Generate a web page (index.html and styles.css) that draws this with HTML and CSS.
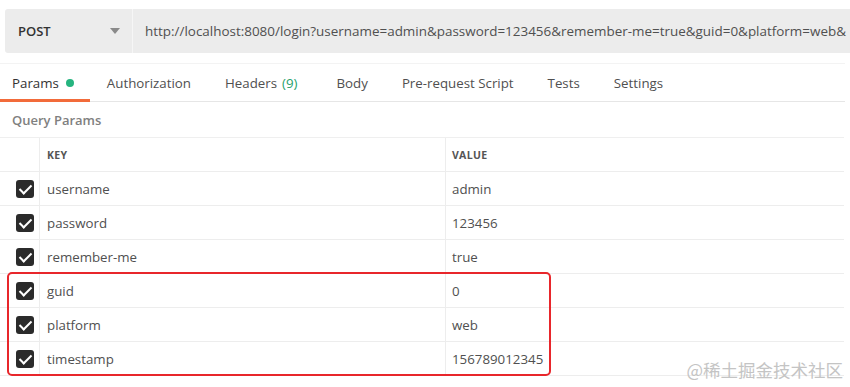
FILE: index.html
```html
<!DOCTYPE html>
<html>
<head>
    <title>Postman - login</title>
    <link rel="stylesheet" href="styles.css">
</head>
<body>
    <div class="request-bar">
        <div class="method">
            <span>POST</span>
            <svg class="caret" width="10" height="6" viewBox="0 0 10 6"><path d="M0 0 L10 0 L5 6 Z" fill="#8a8a8a"/></svg>
        </div>
        <div class="url">http://localhost:8080/login?username=admin&amp;password=123456&amp;remember-me=true&amp;guid=0&amp;platform=web&amp;</div>
    </div>

    <div class="tabs">
        <div class="tab active">Params <span class="dot"></span></div>
        <div class="tab">Authorization</div>
        <div class="tab">Headers <span class="count">(9)</span></div>
        <div class="tab">Body</div>
        <div class="tab">Pre-request Script</div>
        <div class="tab">Tests</div>
        <div class="tab">Settings</div>
    </div>

    <div class="section-title">Query Params</div>

    <div class="params">
        <div class="row head">
            <div class="cell check"></div>
            <div class="cell key">KEY</div>
            <div class="cell value">VALUE</div>
        </div>
        <div class="row">
            <div class="cell check"><span class="box"></span></div>
            <div class="cell key">username</div>
            <div class="cell value">admin</div>
        </div>
        <div class="row">
            <div class="cell check"><span class="box"></span></div>
            <div class="cell key">password</div>
            <div class="cell value">123456</div>
        </div>
        <div class="row">
            <div class="cell check"><span class="box"></span></div>
            <div class="cell key">remember-me</div>
            <div class="cell value">true</div>
        </div>
        <div class="row">
            <div class="cell check"><span class="box"></span></div>
            <div class="cell key">guid</div>
            <div class="cell value">0</div>
        </div>
        <div class="row">
            <div class="cell check"><span class="box"></span></div>
            <div class="cell key">platform</div>
            <div class="cell value">web</div>
        </div>
        <div class="row">
            <div class="cell check"><span class="box"></span></div>
            <div class="cell key">timestamp</div>
            <div class="cell value">156789012345</div>
        </div>
    </div>

    <!-- annotation drawn over the screenshot -->
    <div class="highlight"></div>
    <div class="watermark">@稀土掘金技术社区</div>
</body>
</html>
```

FILE: styles.css
```css
body {
    margin: 0;
    width: 850px;
    height: 387px;
    overflow: hidden;
    background: #fff;
    font-family: 'Open Sans', 'Noto Sans', sans-serif;
    font-size: 13.3px;
    color: #505050;
    position: relative;
}

.request-bar {
    display: flex;
    height: 44px;
    margin: 9px 0 0 5px;
    background: #ececec;
    border-radius: 3px 0 0 3px;
}

.method {
    width: 128px;
    box-sizing: border-box;
    display: flex;
    align-items: center;
    justify-content: space-between;
    padding: 0 12px 0 13px;
    border-right: 1px solid #f6f6f6;
    color: #333;
    font-size: 13px;
    font-weight: 600;
}

.url {
    flex: 1;
    display: flex;
    align-items: center;
    padding-left: 12px;
    white-space: nowrap;
    overflow: hidden;
    font-size: 13.45px;
    color: #505050;
}

.tabs {
    display: flex;
    height: 37px;
    margin-top: 10px;
    border-top: 1px solid #f3f3f3;
    border-bottom: 1px solid #e6e6e6;
    margin-right: 5px;
}

.tab {
    display: flex;
    align-items: center;
    padding: 2px 17px 0;
    color: #505050;
    border-bottom: 3px solid transparent;
    margin-bottom: -1px;
}

.tab.active {
    color: #333;
    border-bottom-color: #f26b3a;
    padding-left: 12px;
    padding-right: 16px;
}

.dot {
    width: 8px;
    height: 8px;
    border-radius: 50%;
    background: #26b47f;
    margin-left: 7px;
}

.count {
    color: #26a06b;
    margin-left: 5px;
    margin-right: 5px;
}

.section-title {
    height: 35px;
    display: flex;
    align-items: center;
    padding-left: 12px;
    color: #808080;
    font-size: 13px;
    font-weight: 600;
}

.params {
    margin-right: 6px;
    border-top: 1px solid #efefef;
}

.row {
    display: flex;
    height: 33px;
    border-bottom: 1px solid #ededed;
}

.cell {
    display: flex;
    align-items: center;
}

.cell.check {
    width: 40px;
    justify-content: center;
    padding-left: 10px;
    box-sizing: border-box;
    border-right: 1px solid #ededed;
}

.cell.key {
    width: 406px;
    padding-left: 7px;
    box-sizing: border-box;
    border-right: 1px solid #ededed;
}

.cell.value {
    flex: 1;
    padding-left: 6px;
}

.row.head .cell {
    font-size: 10.5px;
    font-weight: 700;
    color: #555;
    letter-spacing: 0.3px;
}

.box {
    width: 18px;
    height: 18px;
    border-radius: 3px;
    background: #2b2b2b;
    position: relative;
}

.box::after {
    content: "";
    position: absolute;
    left: 6px;
    top: 2px;
    width: 5px;
    height: 10px;
    border: solid #fff;
    border-width: 0 2.5px 2.5px 0;
    transform: rotate(45deg);
}

.highlight {
    position: absolute;
    left: 7px;
    top: 272px;
    width: 540px;
    height: 100px;
    border: 2.5px solid #e8262b;
    border-radius: 5px;
}

.watermark {
    position: absolute;
    right: 7px;
    top: 357px;
    font-family: 'Noto Sans CJK SC', sans-serif;
    font-size: 17.5px;
    color: #c4c4c4;
}
```
